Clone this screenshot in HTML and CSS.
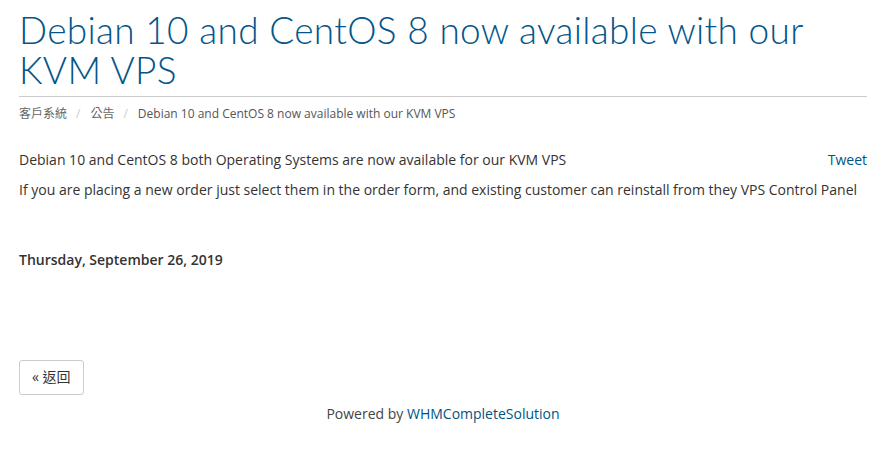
FILE: index.html
```html
<!DOCTYPE html>
<html>
<head>
<meta charset="utf-8">
<link rel="stylesheet" href="styles.css">
</head>
<body>
<div class="page">
  <h1 class="title">Debian 10 and CentOS 8 now available with our KVM VPS</h1>
  <ol class="crumbs">
    <li class="crumb">客戶系統</li>
    <li class="sep">/</li>
    <li class="crumb">公告</li>
    <li class="sep">/</li>
    <li class="crumb current">Debian 10 and CentOS 8 now available with our KVM VPS</li>
  </ol>
  <div class="article">
    <a class="tweet" href="#">Tweet</a>
    <p class="line">Debian 10 and CentOS 8 both Operating Systems are now available for our KVM VPS</p>
    <p class="line">If you are placing a new order just select them in the order form, and existing customer can reinstall from they VPS Control Panel</p>
  </div>
  <p class="date">Thursday, September 26, 2019</p>
  <div class="actions">
    <a class="btn" href="#">« 返回</a>
  </div>
  <p class="footer">Powered by <a href="#">WHMCompleteSolution</a></p>
</div>
</body>
</html>
```
FILE: styles.css
```css
html, body {
  margin: 0;
  padding: 0;
  background: #fff;
}
body {
  font-family: "Open Sans", "Noto Sans CJK TC", sans-serif;
  font-size: 14px;
  color: #333;
}
a {
  color: #005580;
  text-decoration: none;
}
.page {
  padding: 0 23px 0 19px;
}
.title {
  margin: 0;
  padding-top: 10px;
  font-family: "Lato", sans-serif;
  font-weight: 300;
  font-size: 37px;
  letter-spacing: 0.32px;
  line-height: 40px;
  color: #04568a;
  padding-bottom: 6px;
  border-bottom: 1px solid #ccc;
}
.crumbs {
  list-style: none;
  margin: 0;
  padding: 7px 0 0;
  display: flex;
  font-size: 12px;
  line-height: 20px;
  color: #666;
}
.sep {
  padding: 0 10px 0 9px;
  color: #ccc;
}
.crumb.current {
  color: #555;
}
.article {
  margin-top: 26px;
}
.tweet {
  float: right;
}
.line {
  margin: 0 0 10px;
  line-height: 20px;
}
.date {
  margin: 50px 0 0;
  font-weight: 600;
  line-height: 20px;
}
.actions {
  margin-top: 90px;
}
.btn {
  display: inline-block;
  padding: 6px 12px 7px;
  border: 1px solid #ccc;
  border-radius: 3px;
  color: #333;
  line-height: 20px;
}
.footer {
  margin: 9px 0 0;
  text-align: center;
  color: #444;
  line-height: 20px;
}
```
